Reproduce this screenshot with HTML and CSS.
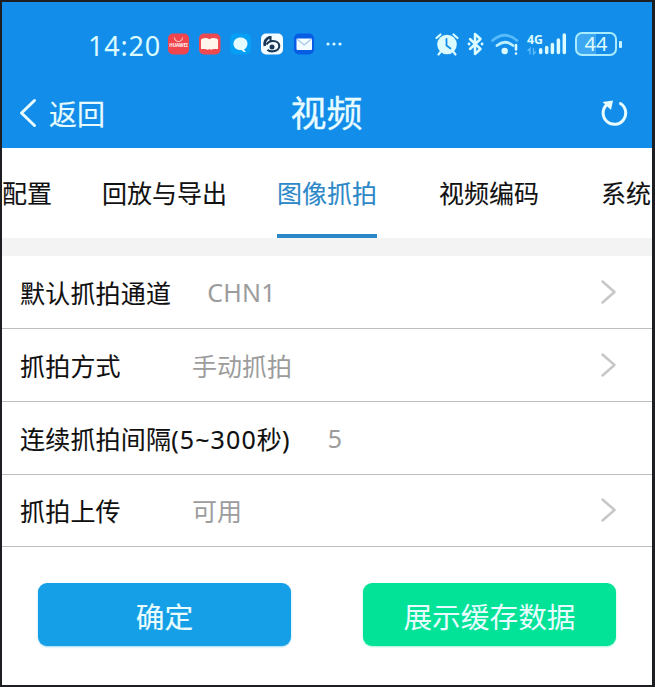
FILE: index.html
```html
<!DOCTYPE html>
<html lang="zh-CN">
<head>
<meta charset="utf-8">
<title>视频</title>
<link rel="stylesheet" href="styles.css">
</head>
<body>
<div class="screen">
  <header class="top">
    <div class="status">
      <span class="clock">14:20</span>
      <svg class="apps" width="180" height="28" viewBox="0 0 180 28">
        <rect x="3" y="3.5" width="21" height="21" rx="5" fill="#f0454c"/>
        <path d="M9.500 7.500a4 4 0 0 0 8 0" fill="none" stroke="#ffc2bc" stroke-width="1.200"/>
        <text x="13.500" y="17" class="brand">HUAWEI</text>
        <rect x="34" y="3.500" width="21.500" height="21" rx="5" fill="#ef4a50"/>
        <path d="M37.500 8.500q4-1.500 7 .8q3-2.300 7-.8l1.500 1v9.500h-5q-1.500 1.500-3.500 0q-2 1.500-4 0h-4.500V9.500z" fill="#fff6ec"/>
        <rect x="65" y="3.500" width="21" height="21" rx="5" fill="#05a0f5"/>
        <path d="M75.500 7.500c4 0 7 2.600 7 6s-2 5.500-3.500 6l2 2.500c-2 .3-3.500-.5-4.500-2c-5 .5-8-2.500-8-6.200s3-6.300 7-6.300z" fill="#e4fbff"/>
        <rect x="96" y="3.500" width="22" height="21" rx="5" fill="#f4fcff"/>
        <path d="M99.800 16C99 11.500 101 8.500 105 7" fill="none" stroke="#1b3858" stroke-width="2.600"/>
        <path d="M105.500 6v5.500M101.500 14.500c1.500-2.500 4-3.500 6.500-3.500c4 0 6.300 2.500 6.300 5s-2.300 5-6.300 5.300c-2.500.2-4.500-.5-5.500-1.500" fill="none" stroke="#1b3858" stroke-width="2.100"/>
        <circle cx="107" cy="17" r="2.500" fill="#1b3858"/>
        <rect x="129" y="3.500" width="20" height="21" rx="5" fill="#075ce4"/>
        <rect x="131.500" y="8.500" width="15.500" height="11.500" rx="1" fill="#f3fcff"/>
        <path d="M132 9l7.200 6 7.200-6" fill="none" stroke="#a6c8ec" stroke-width="1.200"/>
        <g fill="#d9f8ff"><circle cx="163" cy="14" r="1.600"/><circle cx="169" cy="14" r="1.600"/><circle cx="175" cy="14" r="1.600"/></g>
      </svg>
      <svg class="signals" width="138" height="28" viewBox="0 0 138 28">
        <g fill="none" stroke="#dcfbff" stroke-linecap="round">
          <circle cx="14" cy="14.500" r="9.800" fill="#dcfbff" stroke="none"/>
          <path d="M3.500 8l4-3.500M24.500 8l-4-3.500M7.500 22l-2 2.500M20.500 22l2 2.500" stroke-width="2.200"/>
          <path d="M13.500 9v6.500l4 3" stroke="#128eea" stroke-width="1.800"/>
          <path d="M37 9l10.500 10-5.500 5V4l5.500 5L37 19" stroke-width="2.500" stroke-linejoin="round"/>
          <path d="M36 14h.1M49 14h.1" stroke-width="2.800"/>
          <path d="M59.500 10.500q12-10.500 24.500 0" stroke="#57bafa" stroke-width="2.700"/>
          <path d="M64 15.500q8-6.500 16 0" stroke-width="2.800" stroke="#bcefff"/>
          <circle cx="71.700" cy="21" r="3.200" fill="#dcfbff" stroke="none"/>
          <path d="M83 15v4.500M83 23.500v.1" stroke-width="2.600"/>
          <path d="M97 24v-5.500l-2 2M100.500 18.500V24l2-2" stroke="#62c0fa" stroke-width="1.200"/>
          <path d="M107.700 19.800v2.700M113.700 17.500v5M119.400 14.500v8M125.400 10v12.500M131.300 5v17.500" stroke-width="3.500"/>
        </g>
        <text x="94" y="14" class="network" textLength="16" lengthAdjust="spacingAndGlyphs">4G</text>
      </svg>
      <div class="battery"><span class="charge">44</span></div>
      <i class="tip"></i>
    </div>
    <nav class="bar">
      <a class="back"><svg width="18" height="30" viewBox="0 0 18 30"><path d="M15.500 2.500L2.500 15l13 12.500" fill="none" stroke="#e8fcff" stroke-width="3" stroke-linecap="round" stroke-linejoin="round"/></svg><span>返回</span></a>
      <h1>视频</h1>
      <svg class="refresh" width="30" height="30" viewBox="0 0 30 30"><path d="M20.500 5.500A11.300 11.300 0 1 1 7 6.500" fill="none" stroke="#e8fcff" stroke-width="3" stroke-linecap="round"/><path d="M2.500 4l10.500-1.500-2 9.500z" fill="#e8fcff"/></svg>
    </nav>
  </header>
  <div class="tabs">
    <span class="tab">配置</span><span class="tab">回放与导出</span><span class="tab active">图像抓拍</span><span class="tab encoding">视频编码</span><span class="tab">系统</span>
  </div>
  <main class="rows">
    <div class="row"><span class="name wide">默认抓拍通道</span><span class="value channel">CHN1</span><svg class="go" width="17" height="26" viewBox="0 0 17 26"><path d="M2.500 2.500L14.500 13l-12 10.500"/></svg></div>
    <div class="row"><span class="name">抓拍方式</span><span class="value">手动抓拍</span><svg class="go" width="17" height="26" viewBox="0 0 17 26"><path d="M2.500 2.500L14.500 13l-12 10.500"/></svg></div>
    <div class="row"><span class="name">连续抓拍间隔<span class="range">(5~300</span>秒<span class="range">)</span></span><span class="value seconds">5</span></div>
    <div class="row"><span class="name">抓拍上传</span><span class="value">可用</span><svg class="go" width="17" height="26" viewBox="0 0 17 26"><path d="M2.500 2.500L14.500 13l-12 10.500"/></svg></div>
  </main>
  <footer class="actions">
    <button class="confirm">确定</button>
    <button class="cached">展示缓存数据</button>
  </footer>
</div>
</body>
</html>
```
FILE: styles.css
```css
* { box-sizing: border-box; }
body { margin: 0; font-family: "Noto Sans", "Noto Sans CJK SC", sans-serif; }
.screen {
  width: 655px; height: 687px; overflow: hidden;
  display: flex; flex-direction: column;
  background: #fff; border: solid #1d1e22; border-width: 2px 3px 2px 2px;
}
.top { height: 146px; flex: none; background: #128eea; color: #e8fcff; }
.status { height: 76px; padding: 8px 0 0 86px; display: flex; align-items: center; }
.clock { width: 77px; flex: none; padding-top: 3px; font-size: 27px; font-weight: 400; letter-spacing: .8px; line-height: 36px; color: #dcfbff; }
.apps { flex: none; }
.brand { font: 700 4.500px "Noto Sans", sans-serif; fill: #fff; text-anchor: middle; }
.signals { flex: none; margin-left: 88px; }
.network { font: 700 13px "Open Sans", sans-serif; fill: #dcfbff; }
.battery {
  width: 42px; height: 24px; margin-left: 4px; flex: none;
  border: 2px solid #a9ecff; border-radius: 7px;
  display: flex; align-items: center; justify-content: center;
  background: linear-gradient(90deg, #3ea7f1 50%, #158de9 50%);
}
.charge { font-size: 20px; font-weight: 400; line-height: 20px; color: #dcfbff; }
.tip { width: 3px; height: 7px; margin-left: 2px; background: #c8f5ff; border-radius: 1px; }
.bar { height: 70px; display: grid; grid-template-columns: 1fr auto 1fr; align-items: center; padding: 2px 22px 0 17px; }
.back { display: flex; align-items: center; gap: 12px; font-size: 28px; line-height: 36px; -webkit-text-stroke: .15px; }
.back svg { margin-top: -3px; }
.bar h1 { margin: 0 -2px 0 2px; font-size: 36px; font-weight: 400; line-height: 48px; -webkit-text-stroke: .3px; }
.refresh { justify-self: end; margin-top: -2px; }
.tabs {
  height: 108px; flex: none; display: flex;
  background: #fff; border-bottom: 18px solid #f3f3f3; overflow: hidden;
}
.tab { flex: none; height: 90px; line-height: 90px; font-size: 25px; color: #111; margin-right: 50px; -webkit-text-stroke: .1px; }
.tab.active { color: #2d88c8; border-bottom: 4px solid #2b87c7; margin-right: 62px; }
.tab.encoding { margin-right: 62px; }
.rows { flex: none; display: grid; grid-template-rows: 73px 73px 72.500px 72.500px; }
.row { display: flex; align-items: center; padding: 0 35px 0 18px; border-bottom: 1px solid #bdbdbd; font-size: 25px; color: #101010; }
.name { flex: none; min-width: 172px; letter-spacing: .2px; -webkit-text-stroke: .1px; }
.name.wide { min-width: 0; }
.range { letter-spacing: 1.100px; }
.value { color: #9c9c9c; }
.channel { margin-left: 36px; letter-spacing: .2px; }
.seconds { margin-left: 37px; }
.go { margin-left: auto; fill: none; stroke: #c7c7c7; stroke-width: 2.500; stroke-linecap: round; stroke-linejoin: round; }
.actions { display: flex; justify-content: space-between; padding: 36px 36px 0; }
button { width: 253px; height: 63px; padding: 1px 0 0; border: 0; border-radius: 9px; font: 400 28.700px "Noto Sans CJK SC", sans-serif; color: #e8fcff; }
.confirm { background: #149fe6; box-shadow: 0 1px 2px #9bd8f3; -webkit-text-stroke: .15px; }
.cached { background: #02e398; box-shadow: 0 1px 2px #a0f3d7; }
```
